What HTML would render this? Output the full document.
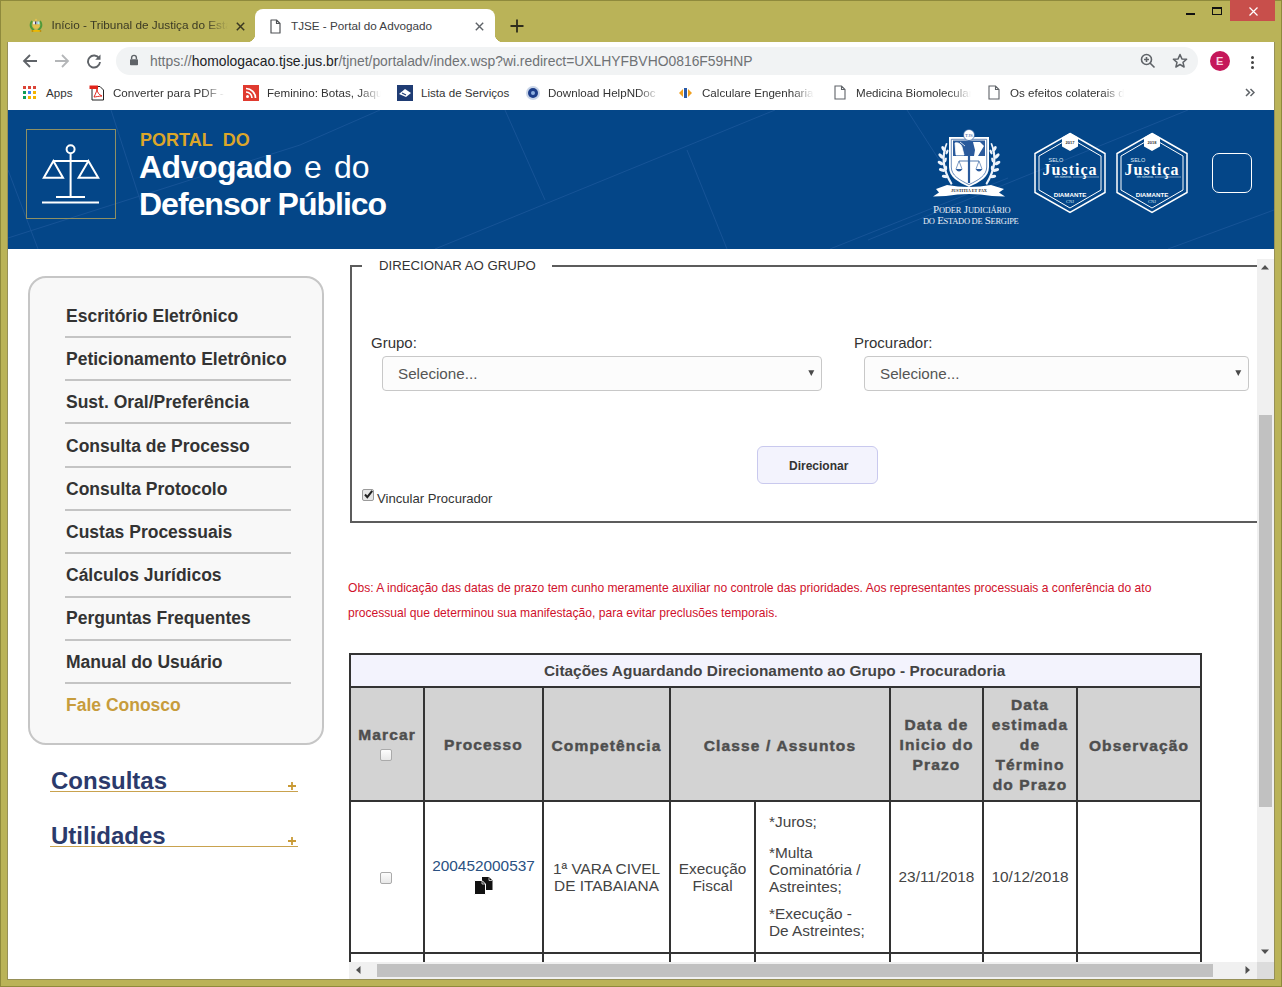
<!DOCTYPE html>
<html><head><meta charset="utf-8">
<style>
*{margin:0;padding:0;box-sizing:border-box}
html,body{width:1282px;height:987px;overflow:hidden;background:#bab358;font-family:"Liberation Sans",sans-serif}
.a{position:absolute}
.t{position:absolute;white-space:nowrap;line-height:1}
#frame{position:absolute;left:0;top:0;width:1282px;height:987px;border:1px solid #8f8a3c}
#inner{position:absolute;left:7px;top:42px;width:1268px;height:938px;border:1px solid #969058;border-top:none}
#toolbar{left:8px;top:42px;width:1266px;height:36px;background:#fff}
#bookmarks{left:8px;top:78px;width:1266px;height:32px;background:#fff}
#banner{left:8px;top:110px;width:1266px;height:139px;background:#044688;overflow:hidden}
#page{left:8px;top:249px;width:1266px;height:730px;background:#fff;overflow:hidden}
.tab{font-size:12px;color:#3b3a24}
.bm{font-size:11.6px;color:#333;top:86.5px}
.fade{-webkit-mask-image:linear-gradient(to right,#000 calc(100% - 22px),transparent 100%);overflow:hidden}
</style></head><body>
<div id="frame"></div>
<div id="inner"></div>
<!-- ===== TAB STRIP ===== -->
<!-- tab1 favicon -->
<svg class="a" style="left:28px;top:17px" width="16" height="16" viewBox="0 0 16 16">
 <path d="M4 4Q0.5 9.5 6 13.5M12 4Q15.5 9.5 10 13.5" fill="none" stroke="#4f9a3a" stroke-width="1.9"/>
 <rect x="5" y="4.5" width="2" height="3" fill="#e8eef0"/><rect x="7" y="4.5" width="1.2" height="3" fill="#443c60"/>
 <rect x="8.2" y="4.5" width="1.3" height="3" fill="#a8a8e0"/><rect x="9.5" y="4.5" width="2" height="3" fill="#a8f0f8"/>
 <path d="M5 7.5H11.5V10Q8.2 13.5 5 10Z" fill="#e3c04a"/>
 <circle cx="8" cy="3" r="1.2" fill="#e0c050"/>
 <path d="M3.5 13H13V14.8H3.5Z" fill="#ecb800"/><circle cx="4.5" cy="14" r="0.9" fill="#b88a10"/><circle cx="12.5" cy="14" r="0.9" fill="#b88a10"/>
</svg>
<div class="t tab fade" style="left:51.5px;top:20px;width:176px;height:15px;font-size:11.8px">Início - Tribunal de Justiça do Estado</div>
<svg class="a" style="left:235.5px;top:21.5px" width="9" height="9" viewBox="0 0 9 9"><path d="M0.8 0.8L8.2 8.2M8.2 0.8L0.8 8.2" stroke="#3a3822" stroke-width="1.5"/></svg>
<!-- active tab -->
<div class="a" style="left:255px;top:9px;width:240px;height:34px;background:#fff;border-radius:8px 8px 0 0"></div>
<div class="a" style="left:247px;top:34px;width:8px;height:8px;background:radial-gradient(circle at 0 0,transparent 8px,#fff 8.5px)"></div>
<div class="a" style="left:495px;top:34px;width:8px;height:8px;background:radial-gradient(circle at 8px 0,transparent 8px,#fff 8.5px)"></div>
<svg class="a" style="left:269.5px;top:18.5px" width="12" height="15" viewBox="0 0 12 15"><path d="M1 1H6.5L10 4.5V14H1Z M6.5 1V4.5H10" fill="none" stroke="#505356" stroke-width="1.2" stroke-linejoin="round"/></svg>
<div class="t tab" style="left:291px;top:20px;color:#3c4043;font-size:11.7px">TJSE - Portal do Advogado</div>
<svg class="a" style="left:474.5px;top:21.5px" width="9" height="9" viewBox="0 0 9 9"><path d="M0.8 0.8L8.2 8.2M8.2 0.8L0.8 8.2" stroke="#5f6368" stroke-width="1.4"/></svg>
<svg class="a" style="left:510px;top:19px" width="14" height="14" viewBox="0 0 14 14"><path d="M7 0.5V13.5M0.5 7H13.5" stroke="#2e2d1c" stroke-width="1.8"/></svg>
<!-- window controls -->
<div class="a" style="left:1186px;top:13px;width:9px;height:2px;background:#111"></div>
<div class="a" style="left:1212px;top:7px;width:10px;height:8px;border:1px solid #111;border-top-width:2px"></div>
<div class="a" style="left:1230px;top:0px;width:45px;height:21px;background:#c84f4b"></div>
<svg class="a" style="left:1249px;top:7px" width="9" height="9" viewBox="0 0 9 9"><path d="M0.5 0.5L8.5 8.5M8.5 0.5L0.5 8.5" stroke="#fff" stroke-width="1.2"/></svg>

<!-- ===== TOOLBAR ===== -->
<div class="a" id="toolbar"></div>
<svg class="a" style="left:22px;top:53px" width="16" height="16" viewBox="0 0 16 16"><path d="M15 8H2.5M8 2L2 8L8 14" fill="none" stroke="#5f6368" stroke-width="1.8"/></svg>
<svg class="a" style="left:54px;top:53px" width="16" height="16" viewBox="0 0 16 16"><path d="M1 8H13.5M8 2L14 8L8 14" fill="none" stroke="#b4b6b8" stroke-width="1.8"/></svg>
<svg class="a" style="left:86px;top:53px" width="16" height="16" viewBox="0 0 16 16"><path d="M13.2 5.5A6 6 0 1 0 14 9" fill="none" stroke="#5f6368" stroke-width="1.9"/><path d="M14.5 1.5V6.8H9.2Z" fill="#5f6368"/></svg>
<div class="a" style="left:116px;top:47px;width:1082px;height:28px;background:#f1f3f4;border-radius:14px"></div>
<svg class="a" style="left:129px;top:54px" width="10" height="12" viewBox="0 0 10 12"><path d="M2.6 5.2V3.8A2.4 2.4 0 0 1 7.4 3.8V5.2" fill="none" stroke="#5f6368" stroke-width="1.4"/><rect x="1" y="5.2" width="8" height="6" rx="0.8" fill="#5f6368"/></svg>
<div class="t" style="left:150px;top:55px;font-size:13.9px;color:#202124"><span style="color:#6f7275">https://</span>homologacao.tjse.jus.br<span style="color:#6f7275">/tjnet/portaladv/index.wsp?wi.redirect=UXLHYFBVHO0816F59HNP</span></div>
<svg class="a" style="left:1140px;top:53px" width="16" height="16" viewBox="0 0 16 16"><circle cx="6.5" cy="6.5" r="5" fill="none" stroke="#5f6368" stroke-width="1.6"/><path d="M10 10L14.5 14.5M6.5 4V9M4 6.5H9" stroke="#5f6368" stroke-width="1.6"/></svg>
<svg class="a" style="left:1172px;top:53px" width="16" height="16" viewBox="0 0 16 16"><path d="M8 1.5L9.9 5.9L14.6 6.3L11 9.4L12.1 14L8 11.5L3.9 14L5 9.4L1.4 6.3L6.1 5.9Z" fill="none" stroke="#5f6368" stroke-width="1.5" stroke-linejoin="round"/></svg>
<div class="a" style="left:1210px;top:51px;width:20px;height:20px;border-radius:50%;background:#c5175a"></div>
<div class="t" style="left:1216px;top:56px;font-size:11px;font-weight:bold;color:#fbd3e2">E</div>
<div class="a" style="left:1250.5px;top:55.5px;width:3.5px;height:3.5px;border-radius:50%;background:#444"></div>
<div class="a" style="left:1250.5px;top:60.5px;width:3.5px;height:3.5px;border-radius:50%;background:#444"></div>
<div class="a" style="left:1250.5px;top:65.5px;width:3.5px;height:3.5px;border-radius:50%;background:#444"></div>

<!-- ===== BOOKMARKS ===== -->
<div class="a" id="bookmarks"></div>
<svg class="a" style="left:23px;top:86px" width="13" height="13" viewBox="0 0 13 13">
 <rect x="0" y="0" width="3" height="3" fill="#db4437"/><rect x="5" y="0" width="3" height="3" fill="#db4437"/><rect x="10" y="0" width="3" height="3" fill="#db4437"/>
 <rect x="0" y="5" width="3" height="3" fill="#0f9d58"/><rect x="5" y="5" width="3" height="3" fill="#4285f4"/><rect x="10" y="5" width="3" height="3" fill="#f4b400"/>
 <rect x="0" y="10" width="3" height="3" fill="#0f9d58"/><rect x="5" y="10" width="3" height="3" fill="#f4b400"/><rect x="10" y="10" width="3" height="3" fill="#f4b400"/>
</svg>
<div class="t bm" style="left:46px">Apps</div>
<svg class="a" style="left:89px;top:85px" width="16" height="16" viewBox="0 0 16 16"><path d="M3 1.5H11L14.5 5V15H3Z" fill="#fff" stroke="#222" stroke-width="1"/><path d="M0.5 0.5H9V4H0.5Z" fill="#e1251b"/><path d="M5 12C7 8 8 5 8 4C8 7 10 10 13 11C10 11 7 12 5 12Z" fill="none" stroke="#e1251b" stroke-width="1"/></svg>
<div class="t bm fade" style="left:113px;width:112px;height:15px">Converter para PDF - Online</div>
<svg class="a" style="left:243px;top:85px" width="16" height="16" viewBox="0 0 16 16"><rect width="16" height="16" fill="#e03a2f"/><circle cx="4.5" cy="11.5" r="1.5" fill="#fff"/><path d="M3 7A6 6 0 0 1 9 13M3 3.5A9.5 9.5 0 0 1 12.5 13" fill="none" stroke="#fff" stroke-width="1.7"/></svg>
<div class="t bm fade" style="left:267px;width:114px;height:15px">Feminino: Botas, Jaquetas</div>
<svg class="a" style="left:397px;top:85px" width="16" height="16" viewBox="0 0 16 16"><rect width="16" height="16" fill="#1f3c74"/><path d="M2 9L8 4L14 8L9 12Z" fill="#fff"/><path d="M5 8L9 10" stroke="#1f3c74" stroke-width="1.2"/></svg>
<div class="t bm" style="left:421px">Lista de Serviços</div>
<svg class="a" style="left:525px;top:85px" width="16" height="16" viewBox="0 0 16 16"><circle cx="8" cy="8" r="7" fill="#c9d5e8"/><circle cx="8" cy="8" r="5" fill="#1d3e8a"/><circle cx="8" cy="8" r="2" fill="#8fb0e0"/></svg>
<div class="t bm fade" style="left:548px;width:112px;height:15px">Download HelpNDoc</div>
<svg class="a" style="left:678px;top:86px" width="15" height="14" viewBox="0 0 15 14"><path d="M1 7L5 3V11Z" fill="#f0a020"/><path d="M14 7L10 3V11Z" fill="#f0a020"/><path d="M6 2H9V12H6Z" fill="#2a5aa8"/></svg>
<div class="t bm fade" style="left:702px;width:112px;height:15px">Calculare Engenharia Ltda</div>
<svg class="a" style="left:834px;top:85px" width="12" height="15" viewBox="0 0 12 15"><path d="M1 1H7.5L11 4.5V14H1Z M7.5 1V4.5H11" fill="none" stroke="#5f6368" stroke-width="1.1"/></svg>
<div class="t bm fade" style="left:856px;width:115px;height:15px">Medicina Biomolecular</div>
<svg class="a" style="left:988px;top:85px" width="12" height="15" viewBox="0 0 12 15"><path d="M1 1H7.5L11 4.5V14H1Z M7.5 1V4.5H11" fill="none" stroke="#5f6368" stroke-width="1.1"/></svg>
<div class="t bm fade" style="left:1010px;width:114px;height:15px">Os efeitos colaterais do</div>
<svg class="a" style="left:1245px;top:88px" width="10" height="9" viewBox="0 0 10 9"><path d="M1 1L4.5 4.5L1 8M5.5 1L9 4.5L5.5 8" fill="none" stroke="#5f6368" stroke-width="1.5"/></svg>


<!-- ===== BANNER ===== -->
<div class="a" id="banner">
<svg class="a" style="left:0;top:0" width="1266" height="139" viewBox="0 0 1266 139">
 <g stroke="#2d64a8" stroke-width="1" opacity="0.45" fill="none">
  <path d="M497 0L537 90"/><path d="M427 139L767 0"/><path d="M679 40L719 139"/>
  <path d="M822 139L1000 68"/><path d="M899 0L935 56"/><path d="M292 35L372 0"/>
  <path d="M103 0L134 96"/><path d="M0 128L292 35"/><path d="M860 130L1180 0"/>
  <path d="M1160 139L1266 100"/><path d="M0 60L30 139"/>
 </g>
</svg>
<div class="a" style="left:18px;top:19px;width:90px;height:90px;border:1px solid #8f9063"></div>
<svg class="a" style="left:0;top:0" width="130" height="139" viewBox="0 0 130 139">
 <g fill="none" stroke="#fff" stroke-width="2">
  <circle cx="62.6" cy="39.3" r="4"/>
  <path d="M62.6 43.5V87"/>
  <path d="M45.4 51H80.4"/>
  <path d="M45.4 51L35.8 67.8H55Z" stroke-linejoin="miter"/>
  <path d="M80.4 51L70.6 67.8H90.2Z" stroke-linejoin="miter"/>
  <path d="M48 87H77"/>
  <path d="M34 92.6H91"/>
 </g>
</svg>
<div class="t" style="left:132px;top:21px;font-size:18px;font-weight:bold;color:#dca62a">PORTAL&nbsp; DO</div>
<div class="t" style="left:131px;top:41px;font-size:32px;font-weight:bold;color:#fff;letter-spacing:-0.5px">Advogado</div>
<div class="t" style="left:296px;top:41px;font-size:32px;color:#fff">e</div>
<div class="t" style="left:326px;top:41px;font-size:32px;color:#fff">do</div>
<div class="t" style="left:131px;top:78px;font-size:32px;font-weight:bold;color:#fff;letter-spacing:-1px">Defensor Público</div>
<!-- crest -->
<svg class="a" style="left:912px;top:15px" width="100" height="80" viewBox="0 0 100 80">
 <g fill="#fff">
  <path d="M29 12H69V42C69 52 60 57 49 62C38 57 29 52 29 42Z"/>
  <path d="M31.3 14.3H66.7V42C66.7 50.5 58.5 55 49 59.6C39.5 55 31.3 50.5 31.3 42Z" fill="none" stroke="#2a5a9c" stroke-width="0.7"/>
  <path d="M33 15.5H65V31H33Z" fill="#2a5a9c"/>
  <path d="M35 18C38 17 41 19 42 22L44 30H36Z M40 17L45 21" fill="#fff" stroke="#fff" stroke-width="0.8"/>
  <path d="M53 17H60L64 21L61 26L58 31H54L55 25Z" fill="#fff"/>
  <path d="M49 15V58" stroke="#2a5a9c" stroke-width="2.2"/>
  <path d="M49 16L46 19M49 16L52 19" stroke="#2a5a9c" stroke-width="1"/>
  <path d="M39 36H59" stroke="#2a5a9c" stroke-width="0.8"/>
  <path d="M39 36L36 44M39 36L42 44M59 36L56 44M59 36L62 44" stroke="#2a5a9c" stroke-width="0.6"/>
  <path d="M35.5 44Q39 49 42.5 44Z M55.5 44Q59 49 62.5 44Z" fill="#2a5a9c"/>
  <circle cx="49" cy="10" r="5.5" fill="#fff" stroke="#2a5a9c" stroke-width="0.7"/>
  <text x="49" y="12" font-family="Liberation Serif" font-size="5" text-anchor="middle" fill="#2a5a9c">TJS</text>
  <g fill="#eef3fa">
   <path d="M26 18Q17 38 31 60L32.5 58.5Q20 38 27.5 18.5Z"/>
   <ellipse cx="23.5" cy="24" rx="1.6" ry="3.2" transform="rotate(-30 23.5 24)"/>
   <ellipse cx="21" cy="31" rx="1.6" ry="3.2" transform="rotate(-45 21 31)"/>
   <ellipse cx="20.5" cy="38" rx="1.6" ry="3.2" transform="rotate(-60 20.5 38)"/>
   <ellipse cx="22" cy="45" rx="1.6" ry="3.2" transform="rotate(-70 22 45)"/>
   <ellipse cx="25" cy="51.5" rx="1.6" ry="3.2" transform="rotate(-80 25 51.5)"/>
   <ellipse cx="27" cy="27" rx="1.2" ry="2.6" transform="rotate(25 27 27)"/>
   <ellipse cx="25.5" cy="35" rx="1.2" ry="2.6" transform="rotate(15 25.5 35)"/>
   <ellipse cx="26" cy="43" rx="1.2" ry="2.6" transform="rotate(0 26 43)"/>
   <path d="M72 18Q81 38 67 60L65.5 58.5Q78 38 70.5 18.5Z"/>
   <ellipse cx="74.5" cy="24" rx="1.6" ry="3.2" transform="rotate(30 74.5 24)"/>
   <ellipse cx="77" cy="31" rx="1.6" ry="3.2" transform="rotate(45 77 31)"/>
   <ellipse cx="77.5" cy="38" rx="1.6" ry="3.2" transform="rotate(60 77.5 38)"/>
   <ellipse cx="76" cy="45" rx="1.6" ry="3.2" transform="rotate(70 76 45)"/>
   <ellipse cx="73" cy="51.5" rx="1.6" ry="3.2" transform="rotate(80 73 51.5)"/>
   <ellipse cx="71" cy="27" rx="1.2" ry="2.6" transform="rotate(-25 71 27)"/>
   <ellipse cx="72.5" cy="35" rx="1.2" ry="2.6" transform="rotate(-15 72.5 35)"/>
   <ellipse cx="72" cy="43" rx="1.2" ry="2.6" transform="rotate(0 72 43)"/>
  </g>
  <path d="M16 64L27 60Q49 64 71 60L84 64L79 67.5L85 71.5L72 71Q49 67 26 71L13 71.5L19 67.5Z"/>
 </g>
 <text x="49" y="67.2" font-family="Liberation Serif" font-weight="bold" font-size="4.3" text-anchor="middle" fill="#333">JUSTITIA ET PAX</text>
</svg>
<div class="t" style="left:925px;top:94px;font-family:'Liberation Serif',serif;font-size:11px;color:#e6ecf5;letter-spacing:-0.2px">P<span style="font-size:8.5px">ODER</span> J<span style="font-size:8.5px">UDICIÁRIO</span></div>
<div class="t" style="left:915px;top:105px;font-family:'Liberation Serif',serif;font-size:11px;color:#e6ecf5;letter-spacing:-0.3px"><span style="font-size:8.5px">DO</span> E<span style="font-size:8.5px">STADO DE</span> S<span style="font-size:8.5px">ERGIPE</span></div>

<svg class="a" style="left:1025px;top:22px" width="74" height="82" viewBox="0 0 74 82">
 <path d="M37 1.5L72 21.5V60.5L37 80.5L2 60.5V21.5Z" fill="none" stroke="#fff" stroke-width="1.5"/>
 <path d="M37 6L68 24V58L37 76L6 58V24Z" fill="none" stroke="#fff" stroke-width="1"/>
 <path d="M37 1L45 5.5V14.5L37 19L29 14.5V5.5Z" fill="#fff"/>
 <text x="37" y="12" font-family="Liberation Sans" font-weight="bold" font-size="4" text-anchor="middle" fill="#333">2017</text>
 <text x="15.5" y="29.5" font-family="Liberation Sans" font-size="5.5" fill="#dfe8f5">SELO</text>
 <text x="9.5" y="42.5" font-family="Liberation Serif" font-weight="bold" font-size="16" fill="#fff" textLength="54" lengthAdjust="spacing">Justiça</text>
 <text x="30" y="46" font-family="Liberation Sans" font-size="3" text-anchor="middle" fill="#dfe8f5">em números</text>
 <path d="M40 45H66" stroke="#dfe8f5" stroke-width="0.5"/>
 <text x="37" y="65" font-family="Liberation Sans" font-weight="bold" font-size="6.2" fill="#fff" text-anchor="middle">DIAMANTE</text>
 <text x="37" y="70.5" font-family="Liberation Serif" font-size="4.5" text-anchor="middle" fill="#dfe8f5">CNJ</text>
</svg>
<svg class="a" style="left:1107px;top:22px" width="74" height="82" viewBox="0 0 74 82">
 <path d="M37 1.5L72 21.5V60.5L37 80.5L2 60.5V21.5Z" fill="none" stroke="#fff" stroke-width="1.5"/>
 <path d="M37 6L68 24V58L37 76L6 58V24Z" fill="none" stroke="#fff" stroke-width="1"/>
 <path d="M37 1L45 5.5V14.5L37 19L29 14.5V5.5Z" fill="#fff"/>
 <text x="37" y="12" font-family="Liberation Sans" font-weight="bold" font-size="4" text-anchor="middle" fill="#333">2018</text>
 <text x="15.5" y="29.5" font-family="Liberation Sans" font-size="5.5" fill="#dfe8f5">SELO</text>
 <text x="9.5" y="42.5" font-family="Liberation Serif" font-weight="bold" font-size="16" fill="#fff" textLength="54" lengthAdjust="spacing">Justiça</text>
 <text x="30" y="46" font-family="Liberation Sans" font-size="3" text-anchor="middle" fill="#dfe8f5">em números</text>
 <path d="M40 45H66" stroke="#dfe8f5" stroke-width="0.5"/>
 <text x="37" y="65" font-family="Liberation Sans" font-weight="bold" font-size="6.2" fill="#fff" text-anchor="middle">DIAMANTE</text>
 <text x="37" y="70.5" font-family="Liberation Serif" font-size="4.5" text-anchor="middle" fill="#dfe8f5">CNJ</text>
</svg>
<div class="a" style="left:1204px;top:43px;width:40px;height:40px;border:1.5px solid #fff;border-radius:7px"></div>
</div>

<!-- ===== PAGE ===== -->
<div class="a" id="page"></div>
<div class="a" style="left:28px;top:276px;width:296px;height:469px;border:2px solid #c6c6c6;border-radius:18px;background:#f8f8f8"></div>
<div class="t" style="left:66px;top:308.0px;font-size:17.5px;font-weight:bold;color:#333">Escritório Eletrônico</div>
<div class="a" style="left:65px;top:336px;width:226px;height:2px;background:#c4c4c4"></div>
<div class="t" style="left:66px;top:351.2px;font-size:17.5px;font-weight:bold;color:#333">Peticionamento Eletrônico</div>
<div class="a" style="left:65px;top:379px;width:226px;height:2px;background:#c4c4c4"></div>
<div class="t" style="left:66px;top:394.4px;font-size:17.5px;font-weight:bold;color:#333">Sust. Oral/Preferência</div>
<div class="a" style="left:65px;top:422px;width:226px;height:2px;background:#c4c4c4"></div>
<div class="t" style="left:66px;top:437.6px;font-size:17.5px;font-weight:bold;color:#333">Consulta de Processo</div>
<div class="a" style="left:65px;top:466px;width:226px;height:2px;background:#c4c4c4"></div>
<div class="t" style="left:66px;top:480.8px;font-size:17.5px;font-weight:bold;color:#333">Consulta Protocolo</div>
<div class="a" style="left:65px;top:509px;width:226px;height:2px;background:#c4c4c4"></div>
<div class="t" style="left:66px;top:524.0px;font-size:17.5px;font-weight:bold;color:#333">Custas Processuais</div>
<div class="a" style="left:65px;top:552px;width:226px;height:2px;background:#c4c4c4"></div>
<div class="t" style="left:66px;top:567.2px;font-size:17.5px;font-weight:bold;color:#333">Cálculos Jurídicos</div>
<div class="a" style="left:65px;top:596px;width:226px;height:2px;background:#c4c4c4"></div>
<div class="t" style="left:66px;top:610.4px;font-size:17.5px;font-weight:bold;color:#333">Perguntas Frequentes</div>
<div class="a" style="left:65px;top:639px;width:226px;height:2px;background:#c4c4c4"></div>
<div class="t" style="left:66px;top:653.6px;font-size:17.5px;font-weight:bold;color:#333">Manual do Usuário</div>
<div class="a" style="left:65px;top:682px;width:226px;height:2px;background:#c4c4c4"></div>
<div class="t" style="left:66px;top:696.8px;font-size:17.5px;font-weight:bold;color:#c79c3c">Fale Conosco</div>
<div class="t" style="left:51px;top:769.2px;font-size:24px;font-weight:bold;color:#2b3a6b">Consultas</div>
<div class="a" style="left:50px;top:791px;width:248px;height:1px;background:#c9a24e"></div>
<svg class="a" style="left:287px;top:781px" width="10" height="10" viewBox="0 0 10 10"><path d="M5 1V9M1 5H9" stroke="#c99a35" stroke-width="1.8"/></svg>
<div class="t" style="left:51px;top:824.4px;font-size:24px;font-weight:bold;color:#2b3a6b">Utilidades</div>
<div class="a" style="left:50px;top:846px;width:248px;height:1px;background:#c9a24e"></div>
<svg class="a" style="left:287px;top:836px" width="10" height="10" viewBox="0 0 10 10"><path d="M5 1V9M1 5H9" stroke="#c99a35" stroke-width="1.8"/></svg>
<div class="a" style="left:350px;top:265px;width:920px;height:258px;border:2px solid #5c5c5c;border-right:none"></div>
<div class="a" style="left:362px;top:258px;width:190px;height:14px;background:#fff"></div>
<div class="t" style="left:379px;top:258.8px;font-size:13.2px;color:#333">DIRECIONAR AO GRUPO</div>
<div class="t" style="left:371px;top:335.1px;font-size:15px;color:#333">Grupo:</div>
<div class="t" style="left:854px;top:335.1px;font-size:15px;color:#333">Procurador:</div>
<div class="a" style="left:382px;top:356px;width:440px;height:35px;border:1px solid #c8c8c8;border-radius:4px;background:#fcfcfc"></div>
<div class="t" style="left:398px;top:365.8px;font-size:15.2px;color:#555">Selecione...</div>
<svg class="a" style="left:808px;top:370px" width="7" height="7" viewBox="0 0 7 7"><path d="M0.3 0.3H6.3L3.3 6Z" fill="#4a4a4a"/></svg>
<div class="a" style="left:864px;top:356px;width:385px;height:35px;border:1px solid #c8c8c8;border-radius:4px;background:#fcfcfc"></div>
<div class="t" style="left:880px;top:365.8px;font-size:15.2px;color:#555">Selecione...</div>
<svg class="a" style="left:1235px;top:370px" width="7" height="7" viewBox="0 0 7 7"><path d="M0.3 0.3H6.3L3.3 6Z" fill="#4a4a4a"/></svg>
<div class="a" style="left:757px;top:446px;width:121px;height:38px;border:1px solid #c9c9ee;border-radius:6px;background:#f3f3fd"></div>
<div class="t" style="left:789px;top:459.8px;font-size:12px;font-weight:bold;color:#333">Direcionar</div>
<div class="a" style="left:362px;top:489px;width:12px;height:12px;border:1px solid #9a9a9a;border-radius:2px;background:#e6e6e6"></div>
<svg class="a" style="left:363px;top:489px" width="11" height="11" viewBox="0 0 11 11"><path d="M2 5.5L4.3 8.2L9.2 1.8" fill="none" stroke="#222" stroke-width="2"/></svg>
<div class="t" style="left:377px;top:491.9px;font-size:13.1px;color:#333">Vincular Procurador</div>
<div class="t" style="left:348px;top:582.0px;font-size:12.1px;color:#d0112b">Obs: A indicação das datas de prazo tem cunho meramente auxiliar no controle das prioridades. Aos representantes processuais a conferência do ato</div>
<div class="t" style="left:348px;top:606.8px;font-size:12.1px;color:#d0112b">processual que determinou sua manifestação, para evitar preclusões temporais.</div>
<div class="a" style="left:349px;top:653px;width:853px;height:35px;background:#f3f3fd"></div>
<div class="a" style="left:349px;top:688px;width:853px;height:114px;background:#d3d3d3"></div>
<div class="a" style="left:349px;top:653px;width:853px;height:2px;background:#333"></div>
<div class="a" style="left:349px;top:686px;width:853px;height:2px;background:#333"></div>
<div class="a" style="left:349px;top:800px;width:853px;height:2px;background:#333"></div>
<div class="a" style="left:349px;top:952px;width:853px;height:2px;background:#333"></div>
<div class="a" style="left:349px;top:686px;width:2px;height:276px;background:#333"></div>
<div class="a" style="left:423px;top:686px;width:2px;height:276px;background:#333"></div>
<div class="a" style="left:542px;top:686px;width:2px;height:276px;background:#333"></div>
<div class="a" style="left:669px;top:686px;width:2px;height:276px;background:#333"></div>
<div class="a" style="left:889px;top:686px;width:2px;height:276px;background:#333"></div>
<div class="a" style="left:982px;top:686px;width:2px;height:276px;background:#333"></div>
<div class="a" style="left:1076px;top:686px;width:2px;height:276px;background:#333"></div>
<div class="a" style="left:1200px;top:686px;width:2px;height:276px;background:#333"></div>
<div class="a" style="left:349px;top:653px;width:2px;height:33px;background:#333"></div>
<div class="a" style="left:1200px;top:653px;width:2px;height:33px;background:#333"></div>
<div class="a" style="left:754px;top:800px;width:2px;height:162px;background:#333"></div>
<div class="t" style="left:544px;top:663.0px;font-size:15.4px;font-weight:bold;color:#444">Citações Aguardando Direcionamento ao Grupo - Procuradoria</div>
<div class="a" style="left:351px;top:724.6px;width:72px;font-size:15.5px;font-weight:bold;color:#4e4e4e;letter-spacing:1.15px;-webkit-text-stroke:0.45px #4e4e4e;text-align:center;line-height:20px">Marcar</div>
<div class="a" style="left:380px;top:749px;width:12px;height:12px;border:1px solid #aaa;border-radius:2px;background:linear-gradient(#fdfdfd,#e8e8e8)"></div>
<div class="a" style="left:425px;top:735.1px;width:117px;font-size:15.5px;font-weight:bold;color:#4e4e4e;letter-spacing:1.15px;-webkit-text-stroke:0.45px #4e4e4e;text-align:center;line-height:20px">Processo</div>
<div class="a" style="left:544px;top:735.8px;width:125px;font-size:15.5px;font-weight:bold;color:#4e4e4e;letter-spacing:1.15px;-webkit-text-stroke:0.45px #4e4e4e;text-align:center;line-height:20px">Competência</div>
<div class="a" style="left:671px;top:735.8px;width:218px;font-size:15.5px;font-weight:bold;color:#4e4e4e;letter-spacing:1.15px;-webkit-text-stroke:0.45px #4e4e4e;text-align:center;line-height:20px">Classe / Assuntos</div>
<div class="a" style="left:891px;top:715.4px;width:91px;font-size:15.5px;font-weight:bold;color:#4e4e4e;letter-spacing:1.15px;-webkit-text-stroke:0.45px #4e4e4e;text-align:center;line-height:20px">Data de<br>Inicio do<br>Prazo</div>
<div class="a" style="left:984px;top:695.1px;width:92px;font-size:15.5px;font-weight:bold;color:#4e4e4e;letter-spacing:1.15px;-webkit-text-stroke:0.45px #4e4e4e;text-align:center;line-height:20px">Data<br>estimada<br>de<br>Término<br>do Prazo</div>
<div class="a" style="left:1078px;top:735.9px;width:122px;font-size:15.5px;font-weight:bold;color:#4e4e4e;letter-spacing:1.15px;-webkit-text-stroke:0.45px #4e4e4e;text-align:center;line-height:20px">Observação</div>
<div class="a" style="left:380px;top:872px;width:12px;height:12px;border:1px solid #aaa;border-radius:2px;background:linear-gradient(#fdfdfd,#e8e8e8)"></div>
<div class="a" style="left:425px;top:856.8px;width:117px;font-size:15.4px;color:#444;text-align:center;line-height:17px;"><span style="color:#2a5182">200452000537</span></div>
<svg class="a" style="left:474px;top:876px" width="20" height="19" viewBox="0 0 20 19"><path d="M8 1H15L18.5 4.5V14H8Z" fill="#111"/><path d="M15 1.3V4.5H18.3" fill="none" stroke="#fff" stroke-width="0.7"/><path d="M0.5 4.5H8L11.5 8V18.5H0.5Z" fill="#111" stroke="#fff" stroke-width="1"/><path d="M8 5V8H11" fill="none" stroke="#fff" stroke-width="0.7"/></svg>
<div class="a" style="left:544px;top:860.2px;width:125px;font-size:15.4px;color:#444;text-align:center;line-height:17px;">1ª VARA CIVEL<br>DE ITABAIANA</div>
<div class="a" style="left:671px;top:860.2px;width:83px;font-size:15.4px;color:#444;text-align:center;line-height:17px;">Execução<br>Fiscal</div>
<div class="a" style="left:769px;top:813.2px;font-size:15.4px;color:#444;line-height:17px;white-space:nowrap">*Juros;</div>
<div class="a" style="left:769px;top:843.5px;font-size:15.4px;color:#444;line-height:17px;white-space:nowrap">*Multa<br>Cominatória /<br>Astreintes;</div>
<div class="a" style="left:769px;top:905.4px;font-size:15.4px;color:#444;line-height:17px;white-space:nowrap">*Execução -<br>De Astreintes;</div>
<div class="a" style="left:891px;top:867.8px;width:91px;font-size:15.4px;color:#444;text-align:center;line-height:17px;">23/11/2018</div>
<div class="a" style="left:984px;top:867.8px;width:92px;font-size:15.4px;color:#444;text-align:center;line-height:17px;">10/12/2018</div>
<div class="a" style="left:1257px;top:259px;width:17px;height:703px;background:#f0f0f0"></div>
<div class="a" style="left:1259px;top:415px;width:13px;height:392px;background:#c1c1c1"></div>
<svg class="a" style="left:1260px;top:263px" width="10" height="8" viewBox="0 0 10 8"><path d="M1 6.5H9L5 2Z" fill="#505050"/></svg>
<svg class="a" style="left:1260px;top:948px" width="10" height="8" viewBox="0 0 10 8"><path d="M1 1.5H9L5 6Z" fill="#505050"/></svg>
<div class="a" style="left:349px;top:962px;width:908px;height:17px;background:#f0f0f0"></div>
<div class="a" style="left:1257px;top:962px;width:17px;height:17px;background:#dcdcdc"></div>
<div class="a" style="left:377px;top:964px;width:836px;height:13px;background:#c1c1c1"></div>
<svg class="a" style="left:354px;top:965px" width="8" height="10" viewBox="0 0 8 10"><path d="M6.5 1V9L2 5Z" fill="#505050"/></svg>
<svg class="a" style="left:1244px;top:965px" width="8" height="10" viewBox="0 0 8 10"><path d="M1.5 1V9L6 5Z" fill="#505050"/></svg>
</body></html>
